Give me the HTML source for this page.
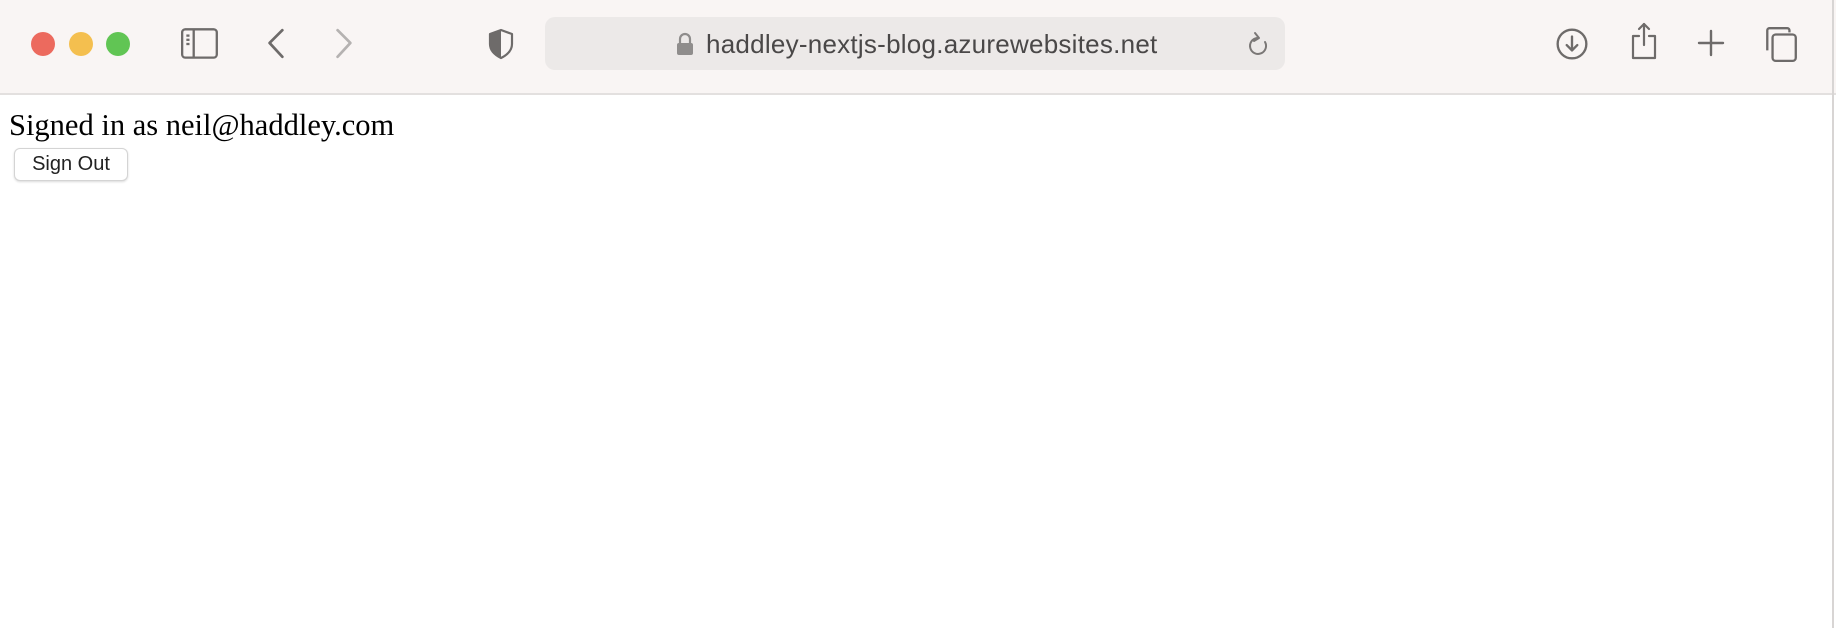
<!DOCTYPE html>
<html><head><style>
html,body{margin:0;padding:0;width:1836px;height:628px;overflow:hidden;background:#fff;}
.tb{position:absolute;left:0;top:0;width:1836px;height:93px;background:#f9f5f4;border-bottom:2px solid #e3e0df;}
.dot{position:absolute;top:32px;width:24px;height:24px;border-radius:50%;}
.url{position:absolute;left:545px;top:17px;width:740px;height:53px;background:#ece9e8;border-radius:10px;}
.urltext{position:absolute;left:706px;top:29px;font:26px "Liberation Sans",sans-serif;letter-spacing:0.25px;color:#4a4848;white-space:nowrap;}
svg{position:absolute;}
.t{position:absolute;left:9px;top:108px;font:30.5px "Liberation Serif",serif;color:#000;}
.btn{position:absolute;left:14px;top:148px;width:112px;height:31px;border:1px solid #d4d4d4;border-radius:6px;box-shadow:0 1px 2px rgba(0,0,0,.15);font:20px "Liberation Sans",sans-serif;text-align:center;line-height:31px;color:#222;background:#fff;}
</style></head><body>
<div class="tb"></div>
<div class="dot" style="left:31px;background:#ec6a5e"></div>
<div class="dot" style="left:69px;background:#f4bf4f"></div>
<div class="dot" style="left:106px;background:#61c554"></div>
<svg style="left:179px;top:26px" width="42" height="36" viewBox="0 0 40 34" fill="none" stroke="#6e6b6a" stroke-width="2.2"><rect x="3" y="3" width="33" height="27" rx="3"/><line x1="14" y1="3" x2="14" y2="30"/><line x1="7" y1="9" x2="10" y2="9"/><line x1="7" y1="13" x2="10" y2="13"/><line x1="7" y1="17" x2="10" y2="17"/></svg>
<svg style="left:264px;top:27px" width="26" height="34" viewBox="0 0 24 32" fill="none" stroke="#6e6b6a" stroke-width="2.6" stroke-linecap="round" stroke-linejoin="round"><polyline points="17,3 5,15 17,28"/></svg>
<svg style="left:331px;top:27px" width="26" height="34" viewBox="0 0 24 32" fill="none" stroke="#b5b2b1" stroke-width="2.6" stroke-linecap="round" stroke-linejoin="round"><polyline points="6,3 18,15 6,28"/></svg>
<svg style="left:486px;top:27px" width="30" height="34" viewBox="0 0 28 34"><path d="M14 3 L25 7 L25 17 C25 24 20 28 14 31 C8 28 3 24 3 17 L3 7 Z" fill="none" stroke="#6e6b6a" stroke-width="2.2" stroke-linejoin="round"/><path d="M14 3 L3 7 L3 17 C3 24 8 28 14 31 Z" fill="#6e6b6a"/></svg>
<div class="url"></div>
<svg style="left:676px;top:32px" width="18" height="25" viewBox="0 0 18 25"><path d="M4 11 V7 a5 5 0 0 1 10 0 V11" fill="none" stroke="#8f8d8c" stroke-width="2.2"/><rect x="1" y="11" width="16" height="12" rx="2" fill="#8f8d8c"/></svg>
<div class="urltext">haddley-nextjs-blog.azurewebsites.net</div>
<svg style="left:1248px;top:30px" width="24" height="30" viewBox="0 0 24 30" fill="none" stroke="#7a7776" stroke-width="2" stroke-linecap="round" stroke-linejoin="round"><path d="M17 12 A8 8 0 1 1 9 8"/><polyline points="7,3 11,8 6,11"/></svg>
<svg style="left:1555px;top:27px" width="34" height="34" viewBox="0 0 32 32" fill="none" stroke="#6e6b6a" stroke-width="2.2" stroke-linecap="round" stroke-linejoin="round"><circle cx="16" cy="16" r="13.5"/><line x1="16" y1="9" x2="16" y2="22"/><polyline points="11,17 16,22 21,17"/></svg>
<svg style="left:1629px;top:21px" width="30" height="40" viewBox="0 0 30 40" fill="none" stroke="#6e6b6a" stroke-width="2.2" stroke-linecap="round" stroke-linejoin="round"><path d="M10 15 H4 V37 H26 V15 H20"/><line x1="15" y1="3" x2="15" y2="24"/><polyline points="10,8 15,3 20,8"/></svg>
<svg style="left:1697px;top:29px" width="28" height="28" viewBox="0 0 28 28" stroke="#6e6b6a" stroke-width="2.4" stroke-linecap="round"><line x1="14" y1="2" x2="14" y2="26"/><line x1="2" y1="14" x2="26" y2="14"/></svg>
<svg style="left:1762px;top:25px" width="38" height="38" viewBox="0 0 36 36" fill="none" stroke="#6e6b6a" stroke-width="2.2"><path d="M5 24 V5 a2 2 0 0 1 2 -2 H24 a2 2 0 0 1 2 2 V7"/><rect x="10" y="9" width="22" height="25" rx="3"/></svg>
<div class="t">Signed in as neil@haddley.com</div>
<div class="btn">Sign Out</div>
<div style="position:absolute;left:1832px;top:0;width:2px;height:628px;background:#d8d5d4"></div>
</body></html>
